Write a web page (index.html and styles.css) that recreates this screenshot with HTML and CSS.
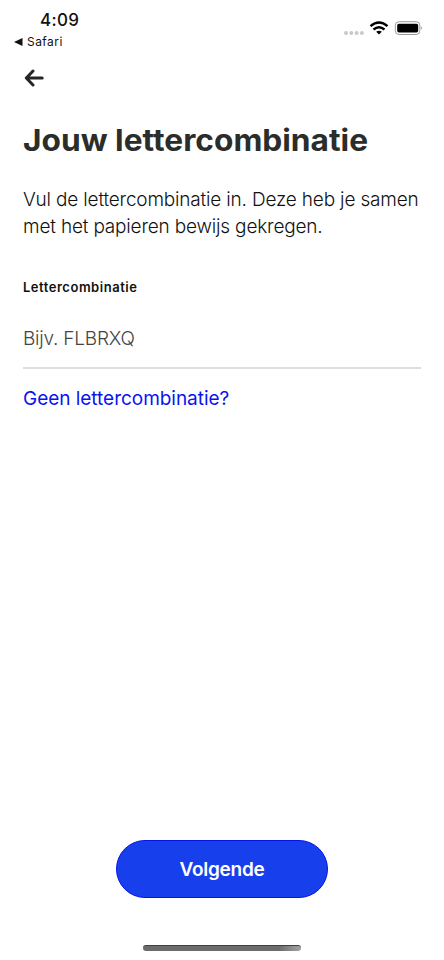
FILE: index.html
```html
<!DOCTYPE html>
<html lang="nl">
<head>
<meta charset="utf-8">
<meta name="viewport" content="width=device-width, initial-scale=1">
<title>Jouw lettercombinatie</title>
<link rel="stylesheet" href="styles.css">
</head>
<body>
<div class="screen">
  <header class="status">
    <div class="status-left">
      <div class="time">4:09</div>
      <div class="return"><svg width="9" height="8" viewBox="0 0 9 8"><path d="M0 4 8.5 0V8Z" fill="#111"/></svg><span>Safari</span></div>
    </div>
    <svg class="indicators" width="80" height="18" viewBox="0 0 80 18">
      <g fill="#c9c9c9"><circle cx="3" cy="13" r="2"/><circle cx="8.3" cy="13" r="2"/><circle cx="13.6" cy="13" r="2"/><circle cx="18.9" cy="13" r="2"/></g>
      <g fill="none" stroke="#000" stroke-width="2.4"><path d="M27.5 6.1Q36 -1.2 44.5 6.1"/><path d="M30.5 9.5Q36 5 41.5 9.5"/></g>
      <path d="M33.2 11.7Q36 9.8 38.8 11.7L36 14.5Z"/>
      <rect x="52.3" y="1.7" width="24.6" height="12.8" rx="3.8" fill="#fff" stroke="#999" stroke-width="1"/>
      <rect x="54.2" y="3.8" width="21" height="8.7" rx="1.8"/>
      <path d="M78.1 6.2Q79.8 8 78.1 9.8Z" fill="#777"/>
    </svg>
  </header>
  <button class="back" aria-label="Terug"><svg width="20" height="18" viewBox="0 0 20 18"><path d="M9 2 2.3 9 9 16M2.8 9H18.2" fill="none" stroke="#242622" stroke-width="3" stroke-linecap="round" stroke-linejoin="round"/></svg></button>
  <main>
    <h1>Jouw lettercombinatie</h1>
    <p class="intro">Vul de lettercombinatie in. Deze heb je samen<br>met het papieren bewijs gekregen.</p>
    <label for="code">Lettercombinatie</label>
    <input id="code" type="text" placeholder="Bijv. FLBRXQ">
    <a class="help" href="#">Geen lettercombinatie?</a>
  </main>
  <footer>
    <button class="next">Volgende</button>
    <div class="home"></div>
  </footer>
</div>
</body>
</html>
```
FILE: styles.css
```css
* { box-sizing: border-box; }
body { margin: 0; background: #fff; color: #111; font-family: Inter, "Liberation Sans", sans-serif; }
button { padding: 0; border: 0; background: none; font-family: inherit; }
svg { display: block; }
.screen { width: 444px; height: 960px; display: flex; flex-direction: column; overflow: hidden; }
.status { height: 60px; display: flex; justify-content: space-between; padding: 10px 21px 0 14px; }
.time { margin-left: 26px; font-size: 17px; line-height: 20px; font-weight: 500; letter-spacing: .3px; white-space: nowrap; }
.return { display: flex; align-items: center; gap: 4px; margin-top: 4px; font-size: 12px; line-height: 16px; letter-spacing: .45px; }
.indicators { margin-top: 10px; }
.back { width: 20px; height: 18px; margin: 9px 0 0 24px; }
main { padding: 33px 23px 0; display: flex; flex-direction: column; }
h1 { margin: 0; font-size: 30px; line-height: 40px; font-weight: 700; color: #2b2d2a; white-space: nowrap; align-self: flex-start; transform: scaleX(1.056); transform-origin: left; }
.intro { margin: 26px 0 0; font-size: 19px; line-height: 27px; font-weight: 300; letter-spacing: -.18px; white-space: nowrap; }
label { margin-top: 37px; font-size: 13px; line-height: 20px; font-weight: 600; letter-spacing: .52px; align-self: flex-start; }
input { width: 398px; height: 72px; padding: 12px 0 0; border: 0; border-bottom: 2px solid #dedede; outline: 0; background: none; font: 300 19px Inter, sans-serif; letter-spacing: -.22px; }
input::placeholder { color: #444; opacity: 1; }
.help { margin-top: 17px; font-size: 19px; line-height: 26px; letter-spacing: -.03px; color: #0b13ef; text-decoration: none; align-self: flex-start; }
footer { margin-top: auto; height: 120.5px; display: flex; flex-direction: column; align-items: center; }
.next { width: 212px; height: 58.5px; padding-top: 1.5px; border: 1px solid #0713e8; border-radius: 30px; background: #173fec; color: #fff; font-size: 19px; font-weight: 600; letter-spacing: -.25px; }
.home { width: 158px; height: 6px; margin-top: 47px; border-radius: 3px; border-top: 1px solid #404040; background: linear-gradient(90deg, #6c6c6c 86%, #a5a5a5); }
```
